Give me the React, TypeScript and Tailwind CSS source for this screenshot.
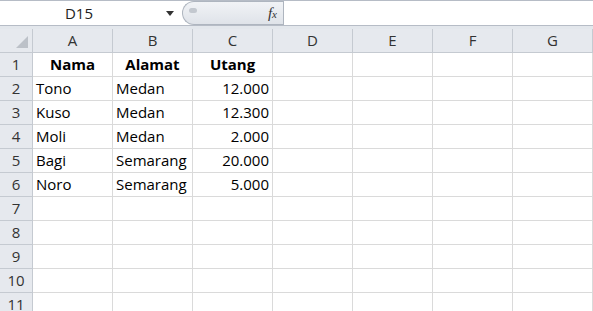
import { Fragment, JSX } from "react";

const columns = ["A", "B", "C", "D", "E", "F", "G"];

const data: (string | null)[][] = [
    ["Nama", "Alamat", "Utang"],
    ["Tono", "Medan", "12.000"],
    ["Kuso", "Medan", "12.300"],
    ["Moli", "Medan", "2.000"],
    ["Bagi", "Semarang", "20.000"],
    ["Noro", "Semarang", "5.000"],
];

const App = (): JSX.Element => {
    const rows = Array.from({ length: 11 }, (_, i) => i + 1);

    return (
        <div
            className="w-[593px] h-[311px] overflow-hidden bg-white text-[15px] text-black"
            style={{ fontFamily: "'Open Sans', 'Liberation Sans', sans-serif" }}
        >
            {/* formula bar */}
            <div className="flex h-[26px] border-t border-b border-[#b6bcc6] bg-white">
                <div className="flex w-[182px] items-center">
                    <div className="w-[158px] text-center text-[15px] leading-none text-[#222]">D15</div>
                    <div className="flex flex-1 justify-center">
                        <div className="h-0 w-0 border-l-[4px] border-r-[4px] border-t-[5px] border-l-transparent border-r-transparent border-t-[#333]" />
                    </div>
                </div>
                <div className="relative flex w-[101px] items-center justify-end rounded-l-[12px] border border-r-0 border-[#aeb5bf] bg-gradient-to-b from-[#f1f3f6] to-[#dfe3e9] pr-[6px]">
                    <div className="absolute left-[6px] top-[6px] h-[5px] w-[8px] rounded-full bg-[#c3c8cf]" />
                    <span
                        className="text-[15px] italic leading-none text-[#333]"
                        style={{ fontFamily: "'Liberation Serif', serif" }}
                    >
                        f<span className="text-[11px]">x</span>
                    </span>
                </div>
                <div className="flex-1 border-l border-[#aeb5bf]" />
            </div>
            <div className="h-[3px] bg-[#e3e7ec]" />

            {/* sheet */}
            <div className="grid grid-cols-[33px_repeat(7,80px)] grid-rows-[24px_repeat(11,24px)]">
                <div className="relative border-r border-b border-[#c5cad1] bg-[#e6e9ee]">
                    <div className="absolute right-[4px] bottom-[4px] h-0 w-0 border-l-[12px] border-b-[12px] border-l-transparent border-b-[#bcc1c8]" />
                </div>
                {columns.map((c) => (
                    <div
                        key={c}
                        className="flex items-center justify-center border-r border-b border-[#c5cad1] bg-[#e6e9ee] text-[#333]"
                    >
                        {c}
                    </div>
                ))}
                {rows.map((r) => (
                    <Fragment key={r}>
                        <div className="flex items-center justify-center border-r border-b border-[#c5cad1] bg-[#e6e9ee] text-[#333]">
                            {r}
                        </div>
                        {columns.map((c, ci) => {
                            const value = data[r - 1]?.[ci] ?? null;
                            const isHeader = r === 1;
                            const numeric = ci === 2 && !isHeader;
                            return (
                                <div
                                    key={`${c}${r}`}
                                    className={`flex items-center overflow-visible whitespace-nowrap border-r border-b border-[#dadada] px-[3px] ${
                                        isHeader ? "justify-center font-bold" : numeric ? "justify-end" : "justify-start"
                                    }`}
                                >
                                    {value}
                                </div>
                            );
                        })}
                    </Fragment>
                ))}
            </div>
        </div>
    );
};

export default App;
